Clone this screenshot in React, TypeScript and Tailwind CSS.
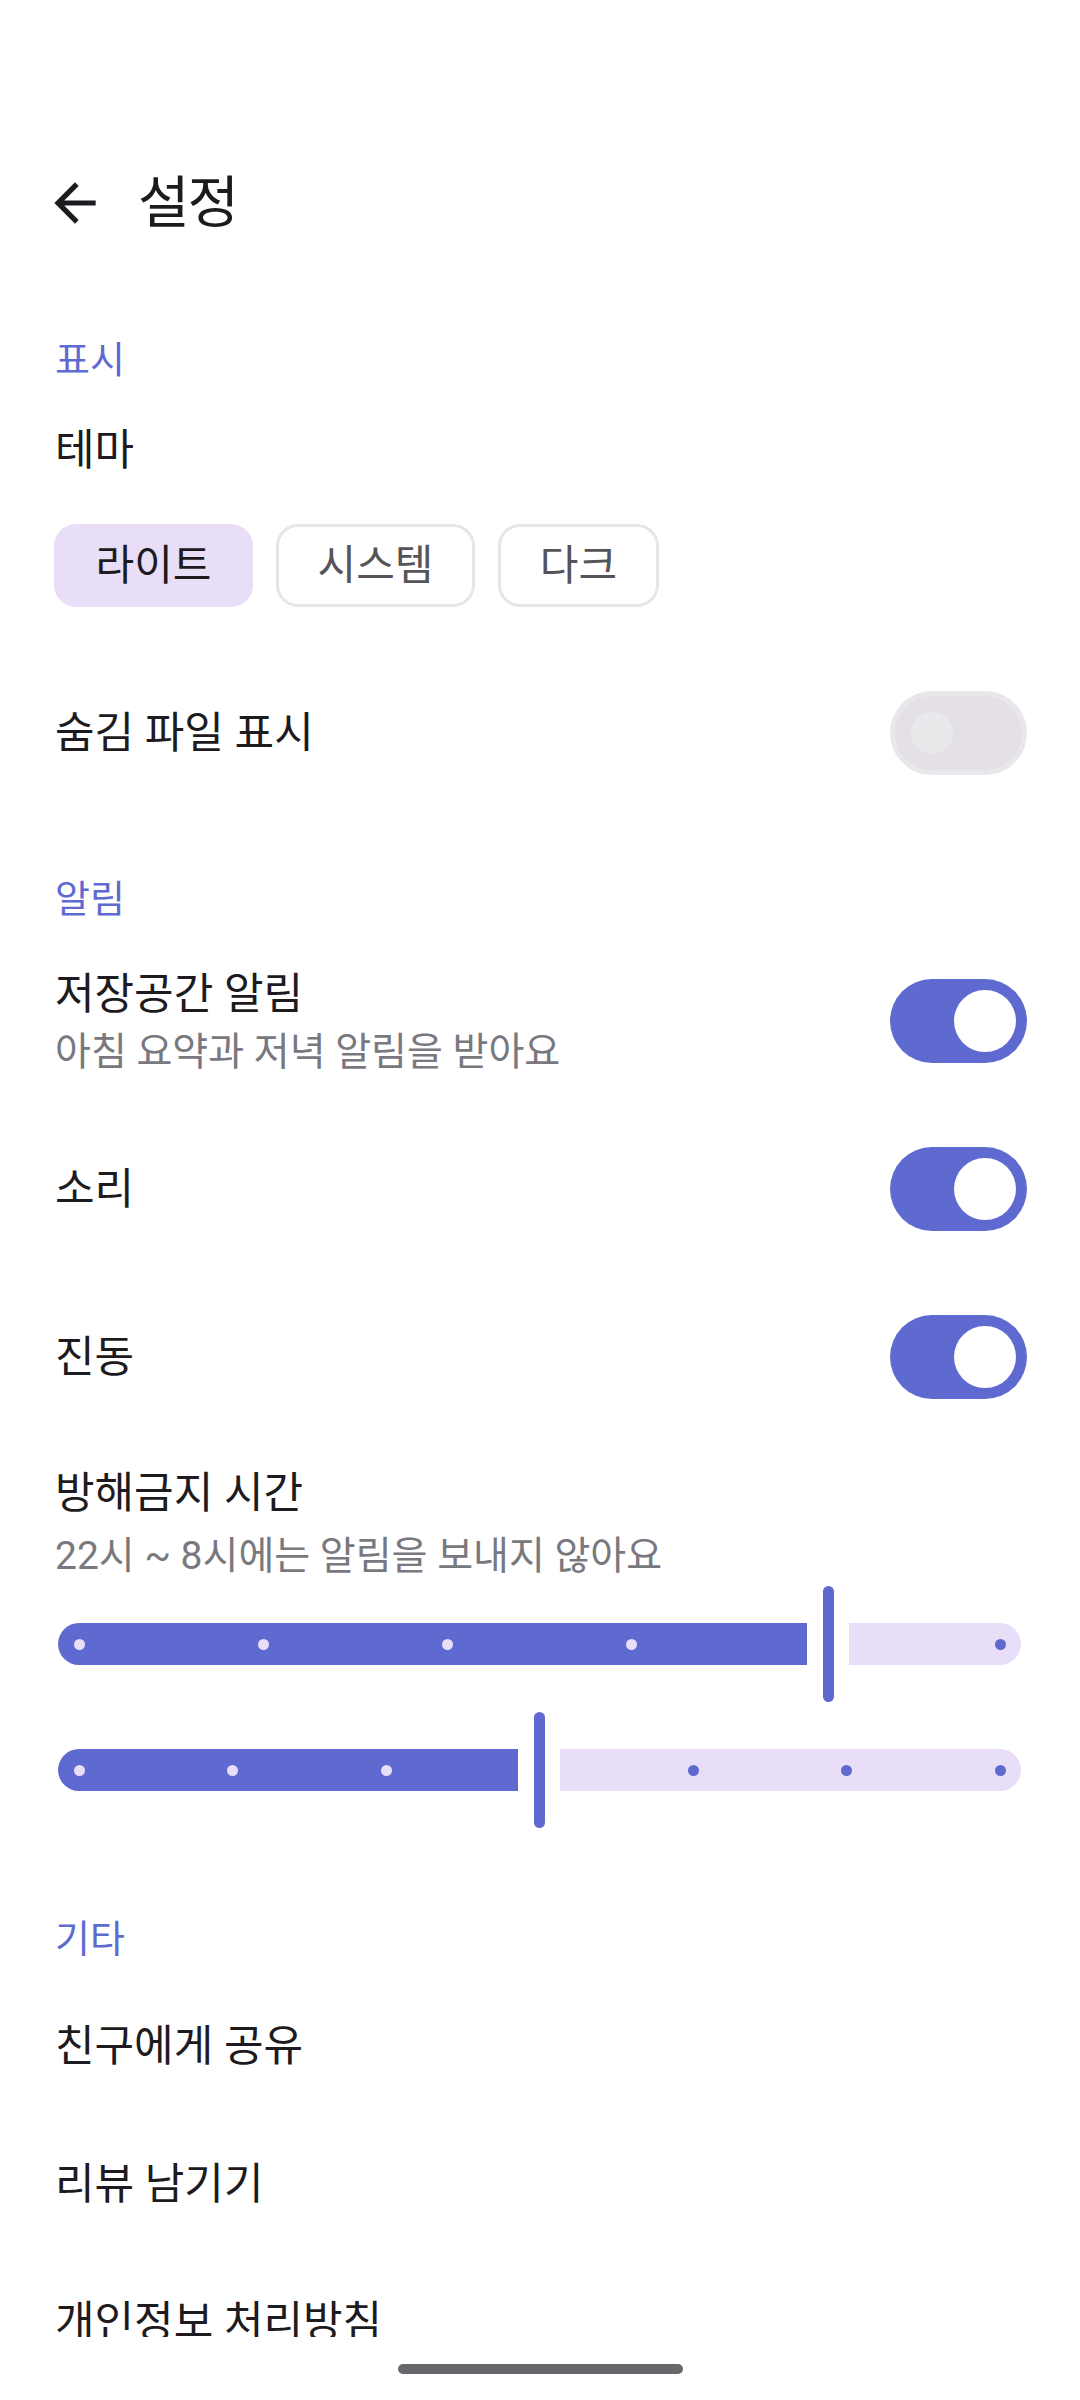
import { ReactNode } from "react";

const SectionLabel = ({ children, className = "" }: { children: ReactNode; className?: string }) => (
  <div className={`h-[60px] flex items-center px-[55px] text-[38px] text-[#5f6ad1] ${className}`}>{children}</div>
);

const Switch = ({ on, disabled }: { on: boolean; disabled?: boolean }) => {
  if (disabled) {
    return (
      <div className="w-[137px] h-[84px] rounded-full border-[5px] border-[#e8e8ea] bg-[#e5e0e7] flex items-center pl-[16px] shrink-0">
        <div className="w-[42px] h-[42px] rounded-full bg-[#e9e9ec]" />
      </div>
    );
  }
  return (
    <div
      className={`w-[137px] h-[84px] rounded-full flex items-center shrink-0 ${
        on ? "bg-[#5f6ad1] justify-end pr-[11px]" : "bg-[#e5e0e7] pl-[16px]"
      }`}
    >
      <div className={`rounded-full ${on ? "w-[62px] h-[62px] bg-white" : "w-[42px] h-[42px] bg-[#79747e]"}`} />
    </div>
  );
};

const SwitchRow = ({ title, subtitle, on, disabled }: { title: string; subtitle?: string; on: boolean; disabled?: boolean }) => (
  <div className="h-[168px] flex items-center justify-between pl-[55px] pr-[53px]">
    <div className="flex flex-col">
      <div className={`${subtitle ? "h-[62px]" : "h-[60px]"} flex items-center text-[43px] text-[#1d1b20]`}>{title}</div>
      {subtitle && <div className="h-[54px] flex items-center text-[39px] text-[#78787e]">{subtitle}</div>}
    </div>
    <Switch on={on} disabled={disabled} />
  </div>
);

// track runs 963px; first and last tick sit 21px in from the ends
const TRACK = 963;
const TICK_SPAN = 921;

const StepSlider = ({ active, steps }: { active: number; steps: number }) => {
  const ticks = Array.from({ length: steps }, (_, i) => 21 + (i * TICK_SPAN) / (steps - 1));
  return (
    <div className="relative ml-[58px] h-[116px] flex items-center" style={{ width: TRACK }}>
      <div className="h-[42px] bg-[#5f6ad1] rounded-l-full rounded-r-[5px]" style={{ width: active }} />
      <div className="ml-[16px] mr-[15px] w-[11px] h-[116px] rounded-full bg-[#5f6ad1]" />
      <div className="flex-1 h-[42px] bg-[#e8def8] rounded-l-[5px] rounded-r-full" />
      {ticks
        .filter((x) => x < active - 12 || x > active + 46)
        .map((x) => (
          <div
            key={x}
            className={`absolute top-[52.5px] w-[11px] h-[11px] rounded-full ${x < active ? "bg-[#e8def8]" : "bg-[#5f6ad1]"}`}
            style={{ left: x - 5.5 }}
          />
        ))}
    </div>
  );
};

const Chip = ({ label, selected, width }: { label: string; selected?: boolean; width: string }) => (
  <div
    className={`${width} h-[83px] rounded-[22px] flex items-center justify-center text-[42px] ${
      selected ? "bg-[#e8def8] text-[#1d1b20]" : "border-[3px] border-[#e6e6e8] text-[#55545a]"
    }`}
  >
    {label}
  </div>
);

const LinkRow = ({ title }: { title: string }) => (
  <div className="h-[138px] shrink-0 flex items-center px-[55px] text-[43px] text-[#1d1b20]">{title}</div>
);

export default function App() {
  return (
    <div className="w-[1080px] h-[2400px] bg-white overflow-hidden text-[#1d1b20] font-['Roboto','Noto_Sans_CJK_KR',sans-serif]">
      <div className="h-[2337px] overflow-hidden flex flex-col">
        {/* HEADER */}
        <div className="mt-[143px] h-[120px] shrink-0 flex items-center pl-[44px]">
          <svg width="62" height="62" viewBox="0 0 24 24" fill="#1d1b20">
            <path d="M20 11H7.83l5.59-5.59L12 4l-8 8 8 8 1.41-1.41L7.83 13H20v-2z" />
          </svg>
          <span className="ml-[32px] text-[56px] tracking-[-2px] text-[#1d1b20]">설정</span>
        </div>

        {/* DISPLAY */}
        <SectionLabel className="mt-[67px] shrink-0">표시</SectionLabel>
        <div className="mt-[30px] h-[60px] shrink-0 flex items-center px-[55px] text-[43px]">테마</div>
        <div className="mt-[44px] shrink-0 flex gap-[23px] pl-[54px]">
          <Chip label="라이트" selected width="w-[199px]" />
          <Chip label="시스템" width="w-[199px]" />
          <Chip label="다크" width="w-[161px]" />
        </div>
        <div className="mt-[42px] shrink-0">
          <SwitchRow title="숨김 파일 표시" on={false} disabled />
        </div>

        {/* NOTIFICATIONS */}
        <SectionLabel className="mt-[52px] shrink-0">알림</SectionLabel>
        <div className="mt-[8px] shrink-0">
          <SwitchRow title="저장공간 알림" subtitle="아침 요약과 저녁 알림을 받아요" on />
          <SwitchRow title="소리" on />
          <SwitchRow title="진동" on />
        </div>

        <div className="mt-[22px] h-[60px] shrink-0 flex items-center px-[55px] text-[43px]">방해금지 시간</div>
        <div className="mt-[5px] h-[56px] shrink-0 flex items-center px-[55px] text-[39px] text-[#78787e]">
          22시 ~ 8시에는 알림을 보내지 않아요
        </div>
        <div className="mt-[2px] shrink-0">
          <StepSlider active={749} steps={6} />
        </div>
        <div className="mt-[10px] shrink-0">
          <StepSlider active={460} steps={7} />
        </div>

        {/* OTHER */}
        <SectionLabel className="mt-[81px] shrink-0">기타</SectionLabel>
        <div className="mt-[8px] flex flex-col">
          <LinkRow title="친구에게 공유" />
          <LinkRow title="리뷰 남기기" />
          <LinkRow title="개인정보 처리방침" />
        </div>
      </div>

      <div className="mt-[27px] mx-auto w-[285px] h-[10px] rounded-full bg-[#68686c]" />
    </div>
  );
}
